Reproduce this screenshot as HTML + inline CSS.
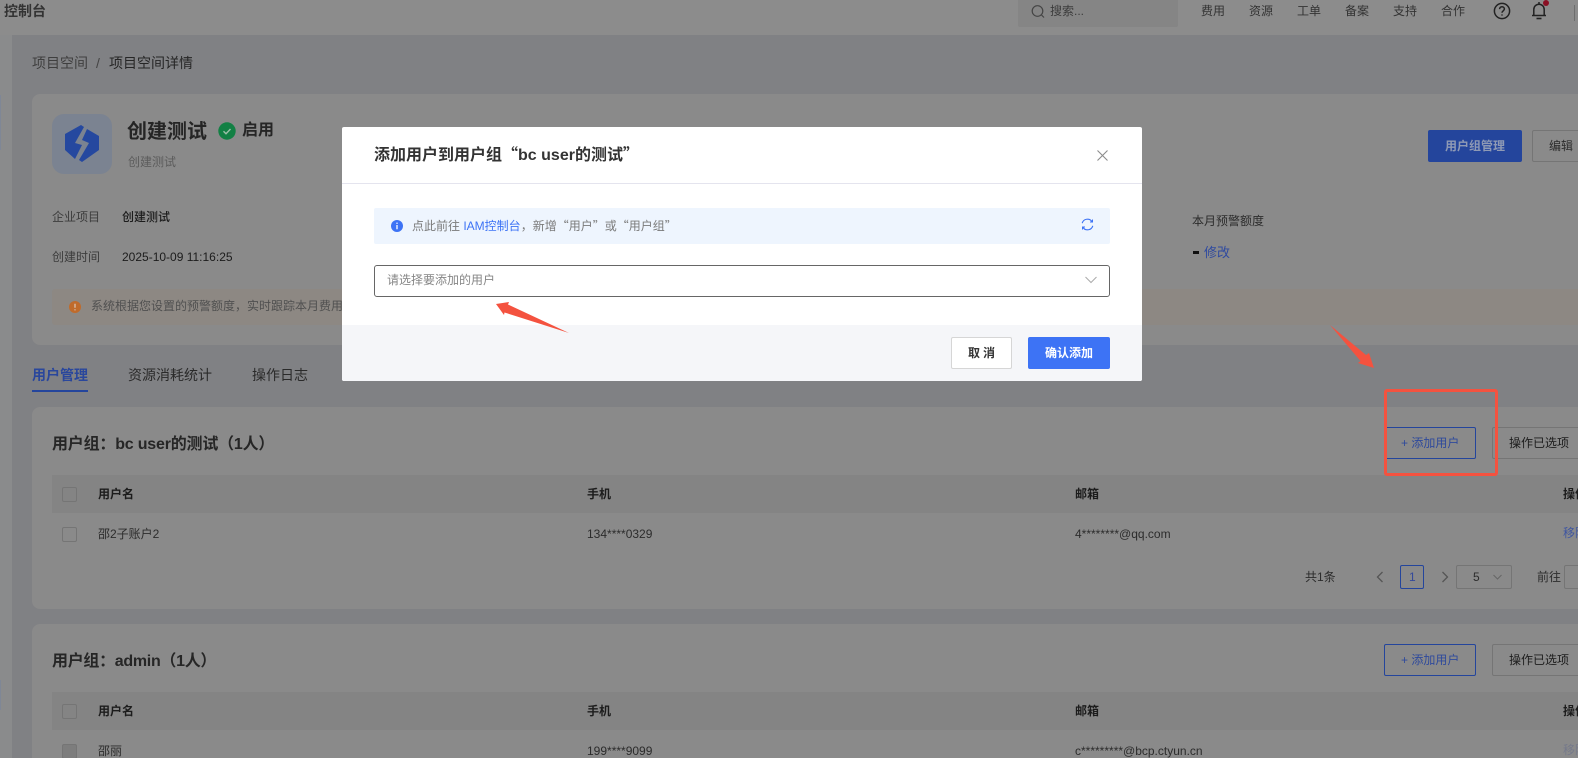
<!DOCTYPE html>
<html lang="zh">
<head>
<meta charset="utf-8">
<title>控制台</title>
<style>
html,body{margin:0;padding:0;width:1578px;height:758px;overflow:hidden;background:#808184}
body{position:relative;font-family:"Liberation Sans","Noto Sans CJK SC",sans-serif;font-size:12px;color:#222}
div,span.t,svg{position:absolute}
.t{position:absolute;white-space:nowrap;line-height:20px;height:20px}
.b{font-weight:700}
.q{font-family:"Noto Sans CJK SC",sans-serif}
.card{background:#8a8a8a;border-radius:8px}
.cb{width:13px;height:13px;border:1px solid #757575;border-radius:2px;box-sizing:content-box}
.btn{box-sizing:border-box;border-radius:2px;height:32px;border:1px solid #757575}
.nav{color:#333}
.g{color:#3c3c3c}
.d{color:#1c1c1c}
</style>
</head>
<body>
<!-- sidebar -->
<div style="left:0;top:35px;width:12px;height:723px;background:#8a8b8c"></div>
<div style="left:0;top:95px;width:1px;height:55px;background:#7f8796"></div>
<div style="left:0;top:680px;width:1px;height:30px;background:#7f8796"></div>
<!-- topbar -->
<div style="left:0;top:0;width:1578px;height:35px;background:#8c8c8c"></div>
<span class="t b" style="left:4px;top:1px;font-size:14px;color:#333">控制台</span>
<div style="left:1018px;top:0;width:160px;height:27px;background:#858585;border-radius:0 0 2px 2px"></div>
<svg style="left:1031px;top:4px" width="15" height="15" viewBox="0 0 15 15" fill="none" stroke="#444" stroke-width="1.200"><circle cx="6.500" cy="7" r="5.300"/><path d="M10.500 11l2.500 2.500"/></svg>
<span class="t" style="left:1050px;top:1px;color:#3c3c3c">搜索...</span>
<span class="t nav" style="left:1201px;top:1px">费用</span>
<span class="t nav" style="left:1249px;top:1px">资源</span>
<span class="t nav" style="left:1297px;top:1px">工单</span>
<span class="t nav" style="left:1345px;top:1px">备案</span>
<span class="t nav" style="left:1393px;top:1px">支持</span>
<span class="t nav" style="left:1441px;top:1px">合作</span>
<svg style="left:1493px;top:2px" width="18" height="18" viewBox="0 0 18 18" fill="none" stroke="#222" stroke-width="1.500"><circle cx="9" cy="9" r="7.600"/><path d="M6.600 7.100c0-1.400 1-2.300 2.400-2.300s2.400.9 2.400 2.200c0 1.800-2.400 1.800-2.400 3.800"/><path d="M9 12.400v1.200"/></svg>
<svg style="left:1530px;top:1px" width="18" height="19" viewBox="0 0 18 19" fill="none" stroke="#222" stroke-width="1.500"><path d="M2 14.500h14M3.800 14.500V8.500c0-3 2.200-5.300 5.200-5.300s5.200 2.300 5.200 5.300v6"/><path d="M9 1v2"/><path d="M6.500 17.500h5" stroke-width="1.600"/></svg>
<div style="left:1543px;top:0;width:6px;height:6px;border-radius:50%;background:#8a1024"></div>
<div style="left:1574px;top:5px;width:1px;height:16px;background:#6e6e6e"></div>

<!-- breadcrumb -->
<span class="t" style="left:32px;top:53px;font-size:14px;color:#3f3f3f">项目空间</span>
<span class="t" style="left:96px;top:53px;font-size:14px;color:#444">/</span>
<span class="t" style="left:109px;top:53px;font-size:14px;color:#262626">项目空间详情</span>

<!-- project card -->
<div class="card" style="left:32px;top:94px;width:1560px;height:251px"></div>
<div style="left:52px;top:114px;width:60px;height:60px;border-radius:12px;background:#7b8391"></div>
<svg style="left:0;top:0" width="200" height="200"><polygon fill="#25489f" points="65,134 81,125 84,127 75,143 82,145 75,159 65,150"/><polygon fill="#25489f" points="87,129 99,136 99,150 82,162 79,160 89,143 82,140"/></svg>
<span class="t b" style="left:127px;top:122px;font-size:20px;color:#252525">创建测试</span>
<svg style="left:218px;top:122px" width="18" height="18" viewBox="0 0 18 18"><circle cx="9" cy="9" r="8.700" fill="#128044"/><path d="M5.500 9.200l2.500 2.500 4.500-4.700" fill="none" stroke="#9dbfa9" stroke-width="1.400"/></svg>
<span class="t" style="left:242px;top:121px;font-size:16px;color:#262626;font-weight:700">启用</span>
<span class="t" style="left:128px;top:152px;color:#5c5c5c">创建测试</span>

<div class="btn" style="left:1428px;top:130px;width:94px;background:#24459c;border-color:#24459c"></div>
<span class="t b" style="left:1445px;top:136px;color:#8f9ab5">用户组管理</span>
<div class="btn" style="left:1532px;top:130px;width:70px"></div>
<span class="t" style="left:1549px;top:136px;color:#2c2c2c">编辑</span>
<span class="t" style="left:1192px;top:211px;color:#2c2c2c">本月预警额度</span>
<div style="left:1193px;top:251px;width:6px;height:3px;background:#111"></div>
<span class="t" style="left:1204px;top:243px;font-size:13px;color:#2f4aa0">修改</span>

<span class="t g" style="left:52px;top:207px">企业项目</span>
<span class="t d" style="left:122px;top:207px;font-weight:500">创建测试</span>
<span class="t g" style="left:52px;top:247px">创建时间</span>
<span class="t d" style="left:122px;top:247px">2025-10-09 11:16:25</span>
<div style="left:52px;top:289px;width:1540px;height:36px;background:#8d8883;border-radius:3px"></div>
<svg style="left:69px;top:301px" width="12" height="12" viewBox="0 0 12 12"><circle cx="6" cy="6" r="6" fill="#c06b2b"/><path d="M6 2.700v4.100M6 8.200v1.200" stroke="#d8c4b2" stroke-width="1.300"/></svg>
<span class="t" style="left:91px;top:296px;color:#505050">系统根据您设置的预警额度，实时跟踪本月费用</span>

<!-- tabs -->
<span class="t b" style="left:32px;top:365px;font-size:14px;color:#2a479c;font-weight:700">用户管理</span>
<div style="left:32px;top:390px;width:56px;height:2px;background:#24459c"></div>
<span class="t" style="left:128px;top:365px;font-size:14px;color:#2a2a2a">资源消耗统计</span>
<span class="t" style="left:252px;top:365px;font-size:14px;color:#2a2a2a">操作日志</span>

<!-- group 1 -->
<div class="card" style="left:32px;top:407px;width:1560px;height:202px"></div>
<span class="t b" style="left:52px;top:435px;font-size:16px;color:#262626;letter-spacing:-.2px">用户组：bc user的测试（1人）</span>
<div class="btn" style="left:1384px;top:427px;width:92px;border-color:#24459c"></div>
<span class="t" style="left:1401px;top:433px;color:#2f4a9c">+ 添加用户</span>
<div class="btn" style="left:1492px;top:427px;width:100px"></div>
<span class="t d" style="left:1509px;top:433px">操作已选项</span>
<div style="left:52px;top:475px;width:1540px;height:38px;background:#848484"></div>
<div class="cb" style="left:62px;top:487px"></div>
<span class="t b" style="left:98px;top:484px;color:#1c1c1c">用户名</span>
<span class="t b" style="left:587px;top:484px;color:#1c1c1c">手机</span>
<span class="t b" style="left:1075px;top:484px;color:#1c1c1c">邮箱</span>
<span class="t b" style="left:1563px;top:484px;color:#1c1c1c">操作</span>
<div class="cb" style="left:62px;top:527px"></div>
<span class="t" style="left:98px;top:524px;color:#2c2c2c">邵2子账户2</span>
<span class="t" style="left:587px;top:524px;color:#2c2c2c">134****0329</span>
<span class="t" style="left:1075px;top:524px;color:#2c2c2c">4********@qq.com</span>
<span class="t" style="left:1563px;top:523px;color:#3f56a0">移除</span>
<span class="t" style="left:1305px;top:567px;color:#2c2c2c">共1条</span>
<svg style="left:1376px;top:571px" width="8" height="12" viewBox="0 0 8 12" fill="none" stroke="#555" stroke-width="1.300"><path d="M6.500 1L1.500 6l5 5"/></svg>
<div style="left:1400px;top:565px;width:24px;height:24px;box-sizing:border-box;border:1px solid #24459c;border-radius:2px"></div>
<span class="t" style="left:1409px;top:567px;color:#34499a">1</span>
<svg style="left:1441px;top:571px" width="8" height="12" viewBox="0 0 8 12" fill="none" stroke="#555" stroke-width="1.300"><path d="M1.500 1l5 5-5 5"/></svg>
<div style="left:1456px;top:565px;width:56px;height:24px;box-sizing:border-box;border:1px solid #757575;border-radius:2px"></div>
<span class="t" style="left:1473px;top:567px;color:#2c2c2c">5</span>
<svg style="left:1493px;top:574px" width="9" height="6" viewBox="0 0 9 6" fill="none" stroke="#666"><path d="M.5 1L4.500 5l4-4"/></svg>
<span class="t" style="left:1537px;top:567px;color:#2c2c2c">前往</span>
<div style="left:1564px;top:565px;width:40px;height:24px;box-sizing:border-box;border:1px solid #757575;border-radius:2px"></div>

<!-- group 2 -->
<div class="card" style="left:32px;top:624px;width:1560px;height:150px"></div>
<span class="t b" style="left:52px;top:652px;font-size:16px;color:#262626;letter-spacing:-.3px">用户组：admin（1人）</span>
<div class="btn" style="left:1384px;top:644px;width:92px;border-color:#24459c"></div>
<span class="t" style="left:1401px;top:650px;color:#2f4a9c">+ 添加用户</span>
<div class="btn" style="left:1492px;top:644px;width:100px"></div>
<span class="t d" style="left:1509px;top:650px">操作已选项</span>
<div style="left:52px;top:692px;width:1540px;height:38px;background:#848484"></div>
<div class="cb" style="left:62px;top:704px"></div>
<span class="t b" style="left:98px;top:701px;color:#1c1c1c">用户名</span>
<span class="t b" style="left:587px;top:701px;color:#1c1c1c">手机</span>
<span class="t b" style="left:1075px;top:701px;color:#1c1c1c">邮箱</span>
<span class="t b" style="left:1563px;top:701px;color:#1c1c1c">操作</span>
<div class="cb" style="left:62px;top:744px;background:#7d7d7d"></div>
<span class="t" style="left:98px;top:741px;color:#2c2c2c">邵丽</span>
<span class="t" style="left:587px;top:741px;color:#2c2c2c">199****9099</span>
<span class="t" style="left:1075px;top:741px;color:#2c2c2c">c*********@bcp.ctyun.cn</span>
<span class="t" style="left:1563px;top:740px;color:#75798a">移除</span>

<!-- red annotations on page -->
<div style="left:1384px;top:389px;width:114px;height:87px;box-sizing:border-box;border:3px solid #f4523f;border-radius:3px"></div>
<svg style="left:0;top:0" width="1578" height="758"><polygon fill="#f4523f" points="1330,325 1366,355 1369,353 1374,368 1358,363 1360.500,361"/></svg>

<!-- dialog -->
<div style="left:342px;top:127px;width:800px;height:254px;background:#fff;border-radius:2px;overflow:hidden">
  <div style="left:0;top:56px;width:800px;height:1px;background:#e4e4ee"></div>
  <div style="left:0;top:198px;width:800px;height:56px;background:#f5f6f9"></div>
</div>
<span class="t b" style="left:374px;top:143px;font-size:16px;color:#333">添加用户到用户组<span class="q">“</span>bc user的测试<span class="q">”</span></span>
<svg style="left:1097px;top:150px" width="11" height="11" viewBox="0 0 11 11" stroke="#8c8c8c" stroke-width="1.100"><path d="M.5.500l10 10M10.500.500l-10 10"/></svg>
<div style="left:374px;top:208px;width:736px;height:36px;background:#eef5fe;border-radius:2px"></div>
<svg style="left:391px;top:220px" width="12" height="12" viewBox="0 0 12 12"><circle cx="6" cy="6" r="6" fill="#3d73f5"/><path d="M6 5v4.200M6 2.600v1.300" stroke="#fff" stroke-width="1.300"/></svg>
<span class="t" style="left:412px;top:216px;color:#7a7a7a">点此前往 <span style="color:#3d73f5">IAM控制台</span>，新增<span class="q">“</span>用户<span class="q">”</span>或<span class="q">“</span>用户组<span class="q">”</span></span>
<svg style="left:1081px;top:218px" width="13" height="13" viewBox="0 0 13 13" fill="none" stroke="#3d73f5" stroke-width="1.100"><path d="M1.200 5.200A5.500 5.500 0 0 1 11 3.500"/><path d="M11.800 7.800A5.500 5.500 0 0 1 2 9.500"/><path d="M11.500 1.500v2.500H9M1.500 11.500V9H4" stroke-width="1"/></svg>
<div style="left:374px;top:265px;width:736px;height:32px;box-sizing:border-box;border:1px solid #666;border-radius:3px;background:#fff"></div>
<span class="t" style="left:387px;top:270px;color:#868686">请选择要添加的用户</span>
<svg style="left:1085px;top:276px" width="12" height="8" viewBox="0 0 12 8" fill="none" stroke="#aaa" stroke-width="1"><path d="M.5 1l5.500 5.500L11.500 1"/></svg>
<div class="btn" style="left:951px;top:337px;width:61px;background:#fff;border-color:#d6d6d6"></div>
<span class="t b" style="left:968px;top:343px;color:#333;letter-spacing:3px">取消</span>
<div class="btn" style="left:1028px;top:337px;width:82px;background:#3d73f5;border:none"></div>
<span class="t b" style="left:1045px;top:343px;color:#fff">确认添加</span>
<svg style="left:0;top:0" width="1578" height="758"><polygon fill="#f4523f" points="496,304 509,302 508,304.500 569,333 504.500,312.500 504,315"/></svg>
</body>
</html>
